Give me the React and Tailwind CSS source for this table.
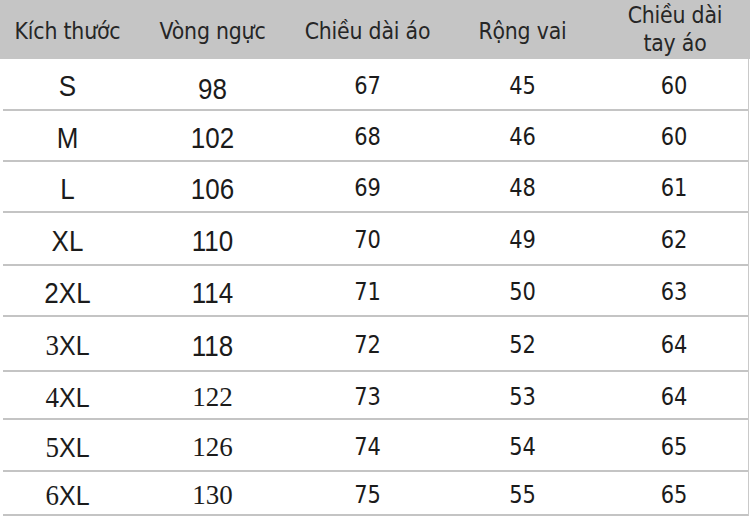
import React from "react";

const SANS = "font-['DejaVu_Sans',Verdana,sans-serif]";
const NARROW = "font-['Liberation_Sans',Arial,sans-serif]";
const SERIF = "font-['Liberation_Serif','Times_New_Roman',serif]";

const rows = [
  { h: "h-[50px]", size: "S", sf: "n", chest: "98", cf: "n", cOff: "translate-y-[5px]", v: ["67", "45", "60"] },
  { h: "h-[49px]", size: "M", sf: "n", chest: "102", cf: "n", v: ["68", "46", "60"] },
  { h: "h-[49px]", size: "L", sf: "n", chest: "106", cf: "n", v: ["69", "48", "61"] },
  { h: "h-[51px]", size: "XL", sf: "n", chest: "110", cf: "n", v: ["70", "49", "62"] },
  { h: "h-[49px]", size: "2XL", sf: "n", chest: "114", cf: "n", v: ["71", "50", "63"] },
  { h: "h-[53px]", size: "3XL", sf: "m", chest: "118", cf: "n", v: ["72", "52", "64"] },
  { h: "h-[46px]", size: "4XL", sf: "m", chest: "122", cf: "s", v: ["73", "53", "64"] },
  { h: "h-[50px]", size: "5XL", sf: "m", chest: "126", cf: "s", v: ["74", "54", "65"] },
  { h: "h-[42px]", size: "6XL", sf: "m", chest: "130", cf: "s", v: ["75", "55", "65"] },
];

function Cell({ kind, children, extra = "" }) {
  if (kind === "m") {
    const s = String(children);
    return (
      <div className="flex items-center justify-center">
        <span className={`${NARROW} text-[25px] scale-y-[1.08] leading-none text-[#1b1b1b] translate-y-[2px] inline-block`}>
          <span className={`${SERIF} text-[27px]`}>{s[0]}</span>
          {s.slice(1)}
        </span>
      </div>
    );
  }
  const cls =
    kind === "n"
      ? `${NARROW} text-[26px] scale-y-[1.1]`
      : kind === "s"
      ? `${SERIF} text-[27px]`
      : `${SANS} text-[21px] scale-y-[1.15]`;
  return (
    <div className="flex items-center justify-center">
      <span className={`${cls} ${extra} leading-none text-[#1b1b1b] translate-y-[2px] inline-block`}>{children}</span>
    </div>
  );
}

export default function App() {
  return (
    <div className="w-[750px] h-[519px] bg-white overflow-hidden">
      <div className="grid grid-cols-[135px_155px_155px_155px_1fr] h-[59px] bg-[#c5c5c5] text-[#262626]">
        {["Kích thước", "Vòng ngực", "Chiều dài áo", "Rộng vai"].map((t) => (
          <div key={t} className="flex items-center justify-center">
            <span className={`${SANS} text-[20.5px] scale-y-[1.12] inline-block translate-y-[2px] tracking-[-0.2px] whitespace-nowrap`}>{t}</span>
          </div>
        ))}
        <div className="flex flex-col items-center justify-center">
          <span className={`${SANS} text-[20.5px] leading-[25px] scale-y-[1.12] inline-block tracking-[-0.2px] text-center`}>
            Chiều dài
            <br />
            tay áo
          </span>
        </div>
      </div>
      <div className="border-r border-[#c9c9c9] w-[749px]">
        {rows.map((r) => (
          <div key={r.size}>
            <div className={`grid grid-cols-[135px_155px_155px_155px_1fr] ${r.h}`}>
              <Cell kind={r.sf}>{r.size}</Cell>
              <Cell kind={r.cf} extra={r.cOff || ""}>{r.chest}</Cell>
              {r.v.map((x, i) => (
                <Cell key={i} kind="v">{x}</Cell>
              ))}
            </div>
            <div className="ml-[3px] h-[2px] bg-[#c4c4c4]" />
          </div>
        ))}
      </div>
    </div>
  );
}
